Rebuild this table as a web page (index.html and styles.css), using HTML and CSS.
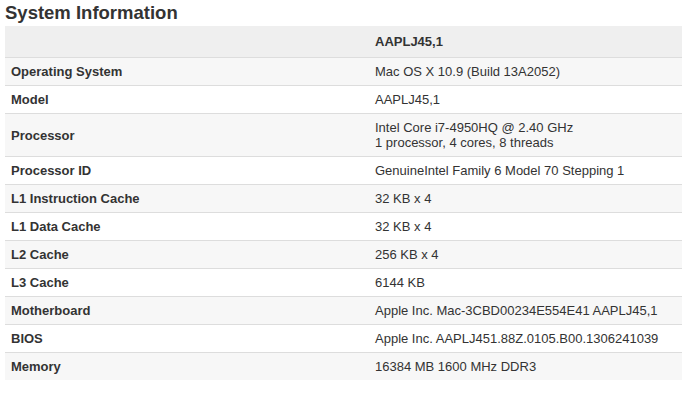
FILE: index.html
```html
<!DOCTYPE html>
<html lang="en">
<head>
    <meta charset="UTF-8">
    <title>System Information</title>
    <link rel="stylesheet" href="styles.css">
</head>
<body>
    <h2>System Information</h2>
    <table class="info-table">
        <thead>
            <tr>
                <th class="name"></th>
                <th class="value">AAPLJ45,1</th>
            </tr>
        </thead>
        <tbody>
            <tr><td class="name">Operating System</td><td class="value">Mac OS X 10.9 (Build 13A2052)</td></tr>
            <tr><td class="name">Model</td><td class="value">AAPLJ45,1</td></tr>
            <tr><td class="name">Processor</td><td class="value">Intel Core i7-4950HQ @ 2.40 GHz<br>1 processor, 4 cores, 8 threads</td></tr>
            <tr><td class="name">Processor ID</td><td class="value">GenuineIntel Family 6 Model 70 Stepping 1</td></tr>
            <tr><td class="name">L1 Instruction Cache</td><td class="value">32 KB x 4</td></tr>
            <tr><td class="name">L1 Data Cache</td><td class="value">32 KB x 4</td></tr>
            <tr><td class="name">L2 Cache</td><td class="value">256 KB x 4</td></tr>
            <tr><td class="name">L3 Cache</td><td class="value">6144 KB</td></tr>
            <tr><td class="name">Motherboard</td><td class="value">Apple Inc. Mac-3CBD00234E554E41 AAPLJ45,1</td></tr>
            <tr><td class="name">BIOS</td><td class="value">Apple Inc. AAPLJ451.88Z.0105.B00.1306241039</td></tr>
            <tr><td class="name">Memory</td><td class="value">16384 MB 1600 MHz DDR3</td></tr>
        </tbody>
    </table>
</body>
</html>
```

FILE: styles.css
```css
body {
    margin: 0;
    padding: 0 0 0 5px;
    background: #ffffff;
    font-family: 'Liberation Sans', Arial, sans-serif;
    color: #333;
}

h2 {
    margin: 0;
    padding-top: 3px;
    height: 23px;
    font-size: 18.5px;
    line-height: 20px;
    font-weight: bold;
    color: #333;
}

/* 정보 테이블 */
.info-table {
    width: 677px;
    border-collapse: collapse;
    font-size: 13px;
}

.info-table th,
.info-table td {
    text-align: left;
    vertical-align: middle;
    padding: 6px 6px;
    line-height: 15px;
}

.info-table th {
    background-color: #efefef;
    padding-top: 8px;
    padding-bottom: 8px;
    border-bottom: 1px solid #dddddd;
}

.info-table td {
    border-top: 1px solid #dddddd;
}

.info-table tbody tr:nth-child(odd) td {
    background-color: #f7f7f7;
}

/* 두 줄짜리 프로세서 행 */
.info-table td br + * {
    display: none;
}

.info-table .name {
    width: 352px;
    font-weight: bold;
}

.info-table td.value {
    font-weight: normal;
}
```
